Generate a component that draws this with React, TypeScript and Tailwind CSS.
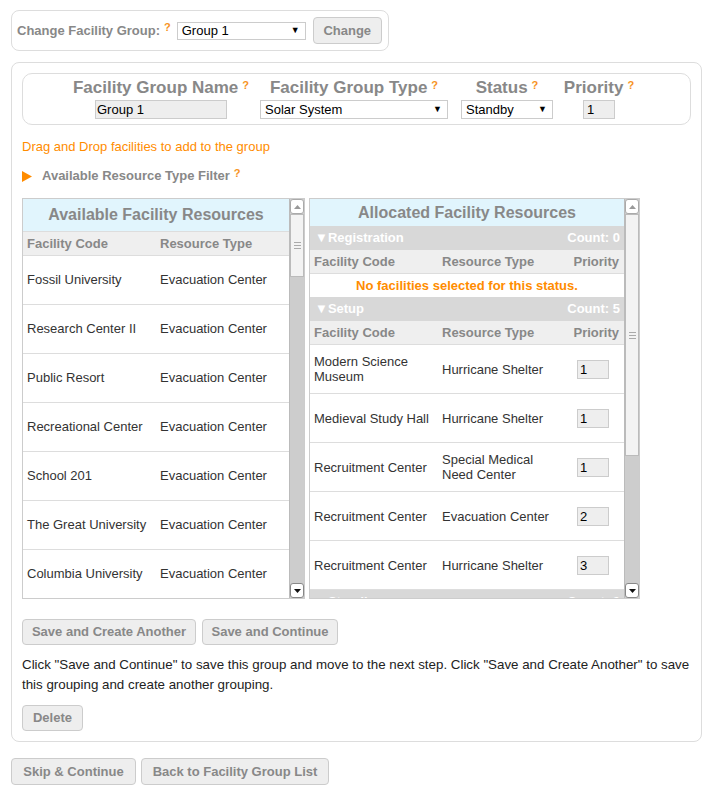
import React from "react";

const Q = () => (
  <span className="text-[#f7931e] font-bold text-[11px] align-top ml-[4px] relative top-[-3px]">?</span>
);

const Btn = ({ children, className = "" }: { children: React.ReactNode; className?: string }) => (
  <div
    className={
      "inline-flex items-center justify-center bg-[#eeeeee] border border-[#cccccc] rounded-[4px] text-[13px] font-bold text-[#888888] " +
      className
    }
  >
    {children}
  </div>
);

const SelectBox = ({ value, className = "" }: { value: string; className?: string }) => (
  <div
    className={
      "flex items-center justify-between bg-white border border-[#cccccc] text-[13px] text-black pl-[4px] pr-[5px] " +
      className
    }
  >
    <span>{value}</span>
    <span className="text-[9px] leading-none">▼</span>
  </div>
);

const Scrollbar = ({ thumb }: { thumb: number }) => (
  <div className="w-[15px] h-full flex flex-col border-l border-[#bbbbbb] bg-[#cdcdcd]">
    <div className="h-[15px] bg-white border border-[#aaaaaa] rounded-[3px] flex items-center justify-center shrink-0">
      <svg width="7" height="4" viewBox="0 0 7 4">
        <path d="M0 4 L3.5 0 L7 4 Z" fill="#999999" />
      </svg>
    </div>
    <div
      className="bg-[#f3f3f3] border border-[#bbbbbb] flex flex-col items-center justify-center gap-[2px] shrink-0"
      style={{ height: thumb }}
    >
      <div className="w-[7px] h-[1px] bg-[#aaaaaa]" />
      <div className="w-[7px] h-[1px] bg-[#aaaaaa]" />
      <div className="w-[7px] h-[1px] bg-[#aaaaaa]" />
    </div>
    <div className="flex-1" />
    <div className="h-[15px] bg-white border border-[#888888] rounded-[3px] flex items-center justify-center shrink-0">
      <svg width="7" height="4" viewBox="0 0 7 4">
        <path d="M0 0 L7 0 L3.5 4 Z" fill="#111111" />
      </svg>
    </div>
  </div>
);

const available = [
  "Fossil University",
  "Research Center II",
  "Public Resort",
  "Recreational Center",
  "School 201",
  "The Great University",
  "Columbia University",
];

const setup: [string, string, string][] = [
  ["Modern Science Museum", "Hurricane Shelter", "1"],
  ["Medieval Study Hall", "Hurricane Shelter", "1"],
  ["Recruitment Center", "Special Medical Need Center", "1"],
  ["Recruitment Center", "Evacuation Center", "2"],
  ["Recruitment Center", "Hurricane Shelter", "3"],
];

const Bar = ({ name, count }: { name: string; count: number }) => (
  <div className="h-[24px] shrink-0 bg-[#d8d8d8] flex items-center justify-between pl-[5px] pr-[4px] text-white font-bold text-[13px]">
    <span>▼{name}</span>
    <span>Count: {count}</span>
  </div>
);

const AllocHead = () => (
  <div className="h-[24px] shrink-0 bg-[#efefef] flex items-center text-[13px] font-bold text-[#888888] border-b border-[#dddddd]">
    <div className="w-[132px] pl-[4px]">Facility Code</div>
    <div className="flex-1">Resource Type</div>
    <div className="pr-[5px]">Priority</div>
  </div>
);

export default function App() {
  return (
    <div
      className="pt-[10px] pl-[11px] text-[#333333] text-[13px]"
      style={{ fontFamily: '"Liberation Sans", Arial, sans-serif' }}
    >
      {/* Top box */}
      <div className="w-[378px] h-[41px] border border-[#dddddd] rounded-[8px] flex items-center pl-[5px]">
        <span className="font-bold text-[#888888]">Change Facility Group:</span>
        <Q />
        <SelectBox value="Group 1" className="w-[129px] h-[18px] ml-[6px]" />
        <Btn className="w-[69px] h-[27px] ml-[7px]">Change</Btn>
      </div>

      {/* Main box */}
      <div className="mt-[11px] w-[691px] border border-[#dddddd] rounded-[8px] p-[10px]">
        <div className="h-[52px] w-[669px] border border-[#dddddd] rounded-[10px] pl-[45px] pt-[4px] flex">
          <div className="w-[186px] flex flex-col items-center">
            <div className="h-[20px] leading-[20px] text-[17px] font-bold text-[#888888] whitespace-nowrap">
              Facility Group Name<Q />
            </div>
            <div className="mt-[2px] w-[132px] h-[19px] bg-[#eeeeee] border border-[#cccccc] text-[13px] text-black pl-[1px] leading-[17px]">
              Group 1
            </div>
          </div>
          <div className="w-[200px] flex flex-col items-center">
            <div className="h-[20px] leading-[20px] text-[17px] font-bold text-[#888888] whitespace-nowrap">
              Facility Group Type<Q />
            </div>
            <SelectBox value="Solar System" className="mt-[2px] w-[188px] h-[19px]" />
          </div>
          <div className="w-[106px] flex flex-col items-center">
            <div className="h-[20px] leading-[20px] text-[17px] font-bold text-[#888888] whitespace-nowrap">
              Status<Q />
            </div>
            <SelectBox value="Standby" className="mt-[2px] w-[92px] h-[19px]" />
          </div>
          <div className="w-[78px] flex flex-col items-center">
            <div className="h-[20px] leading-[20px] text-[17px] font-bold text-[#888888] whitespace-nowrap">
              Priority<Q />
            </div>
            <div className="mt-[2px] w-[32px] h-[19px] bg-[#eeeeee] border border-[#cccccc] text-[13px] text-black pl-[3px] leading-[17px]">
              1
            </div>
          </div>
        </div>

        <div className="mt-[14px] h-[16px] leading-[16px] text-[#ff8c00]">
          Drag and Drop facilities to add to the group
        </div>

        <div className="mt-[13px] h-[16px] leading-[16px] flex items-center">
          <svg width="10" height="11" viewBox="0 0 10 11" className="mr-[10px]">
            <path d="M0 0 L10 5.5 L0 11 Z" fill="#ff8c00" />
          </svg>
          <span className="font-bold text-[#888888]">Available Resource Type Filter</span>
          <Q />
        </div>

        {/* Panels */}
        <div className="mt-[14px] flex gap-[4px] h-[401px]">
          {/* Left */}
          <div className="w-[283px] h-full border border-[#cccccc] flex overflow-hidden">
            <div className="flex-1 flex flex-col overflow-hidden">
              <div className="h-[33px] shrink-0 bg-[#e1f5fd] flex items-center justify-center text-[16px] font-bold text-[#888888] border-b border-[#dddddd]">
                Available Facility Resources
              </div>
              <div className="h-[24px] shrink-0 bg-[#efefef] flex items-center text-[13px] font-bold text-[#888888] border-b border-[#dddddd]">
                <div className="w-[137px] pl-[4px]">Facility Code</div>
                <div>Resource Type</div>
              </div>
              {available.map((n) => (
                <div key={n} className="h-[49px] shrink-0 flex items-center border-b border-[#dddddd] bg-white">
                  <div className="w-[137px] pl-[4px]">{n}</div>
                  <div>Evacuation Center</div>
                </div>
              ))}
            </div>
            <Scrollbar thumb={63} />
          </div>

          {/* Right */}
          <div className="w-[331px] h-full border border-[#cccccc] flex overflow-hidden">
            <div className="flex-1 flex flex-col overflow-hidden">
              <div className="h-[27px] shrink-0 bg-[#e1f5fd] flex items-center justify-center text-[16px] font-bold text-[#888888]">
                Allocated Facility Resources
              </div>
              <Bar name="Registration" count={0} />
              <AllocHead />
              <div className="h-[23px] shrink-0 bg-white flex items-center justify-center text-[13px] font-bold text-[#ff8c00]">
                No facilities selected for this status.
              </div>
              <Bar name="Setup" count={5} />
              <AllocHead />
              {setup.map(([a, b, p], i) => (
                <div key={i} className="h-[49px] shrink-0 flex items-center border-b border-[#dddddd] bg-white leading-[15px]">
                  <div className="w-[132px] pl-[4px]">{a}</div>
                  <div className="w-[118px]">{b}</div>
                  <div className="flex-1 flex justify-center pl-[2px]">
                    <div className="w-[32px] h-[19px] bg-[#eeeeee] border border-[#cccccc] text-black pl-[2px] leading-[17px]">
                      {p}
                    </div>
                  </div>
                </div>
              ))}
              <Bar name="Standby" count={0} />
            </div>
            <Scrollbar thumb={242} />
          </div>
        </div>

        <div className="mt-[20px] flex gap-[6px]">
          <Btn className="w-[174px] h-[26px]">Save and Create Another</Btn>
          <Btn className="w-[136px] h-[26px]">Save and Continue</Btn>
        </div>

        <p className="mt-[10px] w-[672px] leading-[20px] text-[13.33px] text-[#222222]">
          Click "Save and Continue" to save this group and move to the next step. Click "Save and Create Another" to
          save this grouping and create another grouping.
        </p>

        <Btn className="mt-[10px] w-[61px] h-[26px]">Delete</Btn>
      </div>

      <div className="mt-[16px] flex gap-[5px]">
        <Btn className="w-[125px] h-[27px]">Skip &amp; Continue</Btn>
        <Btn className="w-[188px] h-[27px]">Back to Facility Group List</Btn>
      </div>
    </div>
  );
}
